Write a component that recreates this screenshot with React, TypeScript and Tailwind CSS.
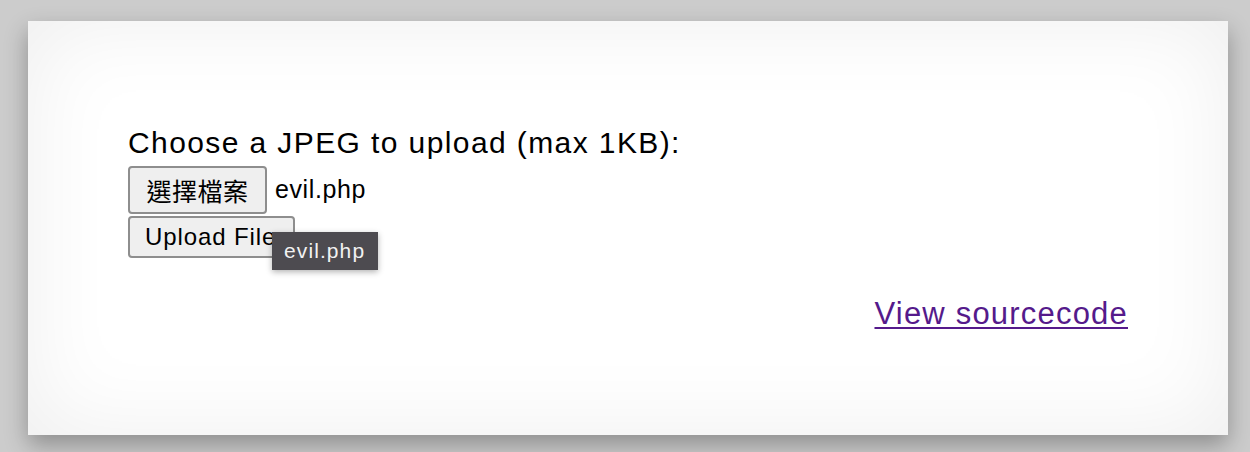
export default function App() {
  return (
    <div className="min-h-[452px] w-[1250px] bg-[#cccccc] pt-[21px] pl-[28px] font-['Liberation_Sans','Noto_Sans_CJK_TC',sans-serif] text-black">
      <div className="w-[1200px] h-[414px] bg-white shadow-[inset_0_0_90px_rgba(0,0,0,0.07),0_10px_22px_rgba(0,0,0,0.3)] px-[100px] pt-[105px]">
        <p className="text-[30px] leading-[34px] tracking-[1.4px]">Choose a JPEG to upload (max 1KB):</p>

        <div className="mt-[6px] flex items-center">
          <button className="h-[48px] w-[139px] rounded-[4px] border-2 border-[#8e8e8e] bg-[#efefef] text-[25px] leading-none font-['Noto_Sans_CJK_TC',sans-serif] tracking-[0.5px]">
            選擇檔案
          </button>
          <span className="ml-[8px] text-[25px] tracking-[0.6px]">evil.php</span>
        </div>

        <div className="relative mt-[2px] h-[42px]">
          <button className="h-[42px] w-[167px] rounded-[4px] border-2 border-[#8e8e8e] bg-[#efefef] pl-[15px] text-left text-[24px] leading-none tracking-[0.9px]">
            Upload File
          </button>
          {/* tooltip from native file input */}
          <div className="absolute left-[144px] top-[16px] h-[38px] w-[106px] bg-[#4d4b50] pl-[12px] text-[21px] leading-[38px] tracking-[1.1px] text-[#f2f2f2] shadow-[0_2px_6px_rgba(0,0,0,0.3)]">
            evil.php
          </div>
        </div>

        <div className="mt-[39px] flex justify-end">
          <a href="#" className="text-[31px] leading-[34px] tracking-[1.2px] text-[#551a8b] underline underline-offset-[3px] decoration-2">
            View sourcecode
          </a>
        </div>
      </div>
    </div>
  );
}
